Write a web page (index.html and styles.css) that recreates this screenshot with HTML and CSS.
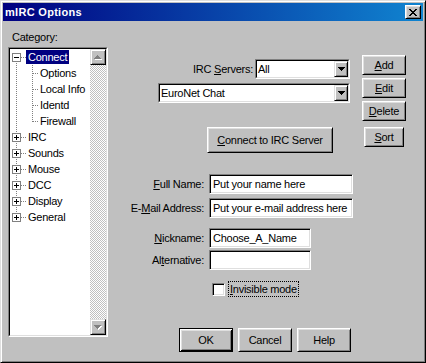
FILE: index.html
```html
<!DOCTYPE html>
<html>
<head>
<meta charset="utf-8">
<title>mIRC Options</title>
<link rel="stylesheet" href="styles.css">
</head>
<body>
<div class="window">
  <div class="titlebar">
    <span class="title">mIRC Options</span>
    <div class="close">
      <svg width="8" height="7" viewBox="0 0 8 7" shape-rendering="crispEdges"><path d="M0 0h2v1h-2zM6 0h2v1h-2zM1 1h2v1h-2zM5 1h2v1h-2zM2 2h4v1h-4zM3 3h2v1h-2zM2 4h4v1h-4zM1 5h2v1h-2zM5 5h2v1h-2zM0 6h2v1h-2zM6 6h2v1h-2z" fill="#000"/></svg>
    </div>
  </div>
  <div class="content">
    <div class="left">
      <div class="cat-label">Category:</div>
      <div class="tree">
        <div class="tree-inner">
          <div class="tree-items">
            <div class="row root first">
              <span class="gutter"><svg class="box" width="9" height="9" viewBox="0 0 9 9" shape-rendering="crispEdges"><rect x="0.5" y="0.5" width="8" height="8" fill="#fff" stroke="#808080"/><rect x="2" y="4" width="5" height="1" fill="#000"/></svg></span>
              <span class="label selected">Connect</span>
            </div>
            <div class="row child"><span class="gutter"></span><span class="label">Options</span></div>
            <div class="row child"><span class="gutter"></span><span class="label">Local Info</span></div>
            <div class="row child"><span class="gutter"></span><span class="label">Identd</span></div>
            <div class="row child lastchild"><span class="gutter"></span><span class="label">Firewall</span></div>
            <div class="row root">
              <span class="gutter"><svg class="box" width="9" height="9" viewBox="0 0 9 9" shape-rendering="crispEdges"><rect x="0.5" y="0.5" width="8" height="8" fill="#fff" stroke="#808080"/><rect x="2" y="4" width="5" height="1" fill="#000"/><rect x="4" y="2" width="1" height="5" fill="#000"/></svg></span>
              <span class="label">IRC</span>
            </div>
            <div class="row root">
              <span class="gutter"><svg class="box" width="9" height="9" viewBox="0 0 9 9" shape-rendering="crispEdges"><rect x="0.5" y="0.5" width="8" height="8" fill="#fff" stroke="#808080"/><rect x="2" y="4" width="5" height="1" fill="#000"/><rect x="4" y="2" width="1" height="5" fill="#000"/></svg></span>
              <span class="label">Sounds</span>
            </div>
            <div class="row root">
              <span class="gutter"><svg class="box" width="9" height="9" viewBox="0 0 9 9" shape-rendering="crispEdges"><rect x="0.5" y="0.5" width="8" height="8" fill="#fff" stroke="#808080"/><rect x="2" y="4" width="5" height="1" fill="#000"/><rect x="4" y="2" width="1" height="5" fill="#000"/></svg></span>
              <span class="label">Mouse</span>
            </div>
            <div class="row root">
              <span class="gutter"><svg class="box" width="9" height="9" viewBox="0 0 9 9" shape-rendering="crispEdges"><rect x="0.5" y="0.5" width="8" height="8" fill="#fff" stroke="#808080"/><rect x="2" y="4" width="5" height="1" fill="#000"/><rect x="4" y="2" width="1" height="5" fill="#000"/></svg></span>
              <span class="label">DCC</span>
            </div>
            <div class="row root">
              <span class="gutter"><svg class="box" width="9" height="9" viewBox="0 0 9 9" shape-rendering="crispEdges"><rect x="0.5" y="0.5" width="8" height="8" fill="#fff" stroke="#808080"/><rect x="2" y="4" width="5" height="1" fill="#000"/><rect x="4" y="2" width="1" height="5" fill="#000"/></svg></span>
              <span class="label">Display</span>
            </div>
            <div class="row root last">
              <span class="gutter"><svg class="box" width="9" height="9" viewBox="0 0 9 9" shape-rendering="crispEdges"><rect x="0.5" y="0.5" width="8" height="8" fill="#fff" stroke="#808080"/><rect x="2" y="4" width="5" height="1" fill="#000"/><rect x="4" y="2" width="1" height="5" fill="#000"/></svg></span>
              <span class="label">General</span>
            </div>
          </div>
          <div class="vscroll">
            <div class="sbtn">
              <svg width="8" height="5" viewBox="0 0 8 5" shape-rendering="crispEdges"><path d="M4 1h1v1h-1zM3 2h3v1h-3zM2 3h5v1h-5zM1 4h7v1h-7z" fill="#fff"/><path d="M3 0h1v1h-1zM2 1h3v1h-3zM1 2h5v1h-5zM0 3h7v1h-7z" fill="#808080"/></svg>
            </div>
            <div class="track"></div>
            <div class="sbtn">
              <svg width="8" height="5" viewBox="0 0 8 5" shape-rendering="crispEdges"><path d="M1 1h7v1h-7zM2 2h5v1h-5zM3 3h3v1h-3zM4 4h1v1h-1z" fill="#fff"/><path d="M0 0h7v1h-7zM1 1h5v1h-5zM2 2h3v1h-3zM3 3h1v1h-1z" fill="#808080"/></svg>
            </div>
          </div>
        </div>
      </div>
    </div>

    <div class="right">
      <div class="top">
        <div class="main">
          <div class="srv-row">
            <span class="srv-label">IRC <u>S</u>ervers:</span>
            <div class="combo all">
              <div class="combo-in">
                <span class="ctext">All</span>
                <span class="drop"><svg width="7" height="4" viewBox="0 0 7 4" shape-rendering="crispEdges"><path d="M0 0h7v1h-7zM1 1h5v1h-5zM2 2h3v1h-3zM3 3h1v1h-1z" fill="#000"/></svg></span>
              </div>
            </div>
          </div>
          <div class="combo net">
            <div class="combo-in">
              <span class="ctext">EuroNet Chat</span>
              <span class="drop"><svg width="7" height="4" viewBox="0 0 7 4" shape-rendering="crispEdges"><path d="M0 0h7v1h-7zM1 1h5v1h-5zM2 2h3v1h-3zM3 3h1v1h-1z" fill="#000"/></svg></span>
            </div>
          </div>
          <div class="btn connect"><span><u>C</u>onnect to IRC Server</span></div>
        </div>
        <div class="side">
          <div class="btn"><span><u>A</u>dd</span></div>
          <div class="btn"><span><u>E</u>dit</span></div>
          <div class="btn"><span><u>D</u>elete</span></div>
          <div class="btn sort"><span><u>S</u>ort</span></div>
        </div>
      </div>

      <div class="form">
        <div class="frow r-full">
          <span class="lbl"><u>F</u>ull Name:</span>
          <div class="field wide">Put your name here</div>
        </div>
        <div class="frow r-mail">
          <span class="lbl">E-<u>M</u>ail Address:</span>
          <div class="field wide">Put your e-mail address here</div>
        </div>
        <div class="frow r-nick">
          <span class="lbl"><u>N</u>ickname:</span>
          <div class="field narrow">Choose_A_Name</div>
        </div>
        <div class="frow r-alt">
          <span class="lbl">Al<u>t</u>ernative:</span>
          <div class="field narrow"></div>
        </div>
      </div>

      <div class="check-row">
        <span class="checkbox"></span>
        <span class="check-label"><u>I</u>nvisible mode</span>
      </div>

      <div class="bottom">
        <div class="btn dlg default"><span>OK</span></div>
        <div class="btn dlg"><span>Cancel</span></div>
        <div class="btn dlg"><span>Help</span></div>
      </div>
    </div>
  </div>
</div>
</body>
</html>
```

FILE: styles.css
```css
* { box-sizing: border-box; }

html, body {
  margin: 0;
  padding: 0;
}

body {
  width: 426px;
  height: 363px;
  overflow: hidden;
  background: #c0c0c0;
  font-family: "Liberation Sans", Arial, sans-serif;
  font-size: 11px;
  letter-spacing: -0.25px;
  color: #000;
}

u { text-decoration: underline; text-underline-offset: 1px; }

.window {
  width: 426px;
  height: 363px;
  background: #c0c0c0;
  border: 1px solid;
  border-color: #dfdfdf #000 #000 #dfdfdf;
  box-shadow: inset 1px 1px #fff, inset -1px -1px #808080;
  padding: 2px;
  display: flex;
  flex-direction: column;
}

/* Title bar */
.titlebar {
  height: 18px;
  flex: none;
  background: linear-gradient(to right, #000080, #1084d0);
  display: flex;
  align-items: center;
  justify-content: space-between;
  padding: 0 2px 0 2px;
}

.title {
  color: #fff;
  font-weight: bold;
  font-size: 11px;
  letter-spacing: 0.3px;
}

.close {
  width: 16px;
  height: 14px;
  background: #c0c0c0;
  border: 1px solid;
  border-color: #fff #000 #000 #fff;
  box-shadow: inset 1px 1px #dfdfdf, inset -1px -1px #808080;
  display: flex;
  align-items: center;
  justify-content: center;
}
.close svg { display: block; margin-left: -1px; }

/* Content */
.content {
  flex: 1;
  display: flex;
}

.left {
  width: 105px;
  flex: none;
  padding-left: 5px;
}

.cat-label {
  margin: 10px 0 3px 4px;
  line-height: 13px;
}

.tree {
  width: 100px;
  height: 290px;
  border: 1px solid;
  border-color: #808080 #fff #fff #808080;
}

.tree-inner {
  height: 100%;
  border: 1px solid;
  border-color: #000 #dfdfdf #dfdfdf #000;
  background: #fff;
  display: flex;
}

.tree-items {
  flex: 1;
}

.row {
  height: 16px;
  display: flex;
  align-items: center;
}

.gutter {
  flex: none;
  height: 16px;
  background-repeat: no-repeat;
}

.root .gutter {
  width: 16px;
  padding: 4px 0 0 2px;
  background-image:
    repeating-linear-gradient(#808080 0 1px, transparent 1px 2px),
    repeating-linear-gradient(to right, #808080 0 1px, transparent 1px 2px);
  background-size: 1px 16px, 5px 1px;
  background-position: 6px 0, 11px 8px;
}
.root.first .gutter {
  background-size: 1px 8px, 5px 1px;
  background-position: 6px 8px, 11px 8px;
}
.root.last .gutter {
  background-size: 1px 8px, 5px 1px;
  background-position: 6px 0, 11px 8px;
}

.box { display: block; }

.child .gutter {
  width: 28px;
  background-image:
    repeating-linear-gradient(#808080 0 1px, transparent 1px 2px),
    repeating-linear-gradient(#808080 0 1px, transparent 1px 2px),
    repeating-linear-gradient(to right, #808080 0 1px, transparent 1px 2px);
  background-size: 1px 16px, 1px 16px, 5px 1px;
  background-position: 6px 0, 22px 0, 23px 8px;
}
.child.lastchild .gutter {
  background-size: 1px 16px, 1px 9px, 5px 1px;
}

.label {
  padding: 0 2px;
  height: 14px;
  line-height: 14px;
  white-space: nowrap;
}
.selected {
  background: #000080;
  color: #fff;
}

.vscroll {
  width: 16px;
  flex: none;
  display: flex;
  flex-direction: column;
}

.sbtn {
  width: 16px;
  height: 16px;
  flex: none;
  background: #c0c0c0;
  border: 1px solid;
  border-color: #dfdfdf #000 #000 #dfdfdf;
  box-shadow: inset 1px 1px #fff, inset -1px -1px #808080;
  display: flex;
  align-items: center;
  justify-content: center;
}
.sbtn svg { display: block; }

.track {
  flex: 1;
  background: repeating-conic-gradient(#c0c0c0 0 25%, #fff 0 50%) 0 0 / 2px 2px;
}

/* Right panel */
.right {
  flex: 1;
  display: flex;
  flex-direction: column;
}

.top {
  display: flex;
  gap: 12px;
  margin: 34px 0 0 50px;
}

.main {
  width: 192px;
  display: flex;
  flex-direction: column;
}

.srv-row {
  display: flex;
  justify-content: flex-end;
  align-items: center;
  gap: 2px;
  margin-top: 4px;
}

.combo {
  height: 20px;
  border: 1px solid;
  border-color: #808080 #fff #fff #808080;
}
.combo.all { width: 95px; }
.combo.net { width: 192px; margin-top: 4px; }

.combo-in {
  height: 100%;
  border: 1px solid;
  border-color: #000 #dfdfdf #dfdfdf #000;
  background: #fff;
  display: flex;
  align-items: center;
}

.ctext {
  flex: 1;
  padding-left: 1px;
  white-space: nowrap;
}

.drop {
  width: 14px;
  height: 16px;
  flex: none;
  background: #c0c0c0;
  border: 1px solid;
  border-color: #dfdfdf #000 #000 #dfdfdf;
  box-shadow: inset 1px 1px #fff, inset -1px -1px #808080;
  display: flex;
  align-items: center;
  justify-content: center;
}
.drop svg { display: block; }

.btn {
  background: #c0c0c0;
  border: 1px solid;
  border-color: #fff #000 #000 #fff;
  box-shadow: inset 1px 1px #dfdfdf, inset -1px -1px #808080;
  display: flex;
  align-items: center;
  justify-content: center;
  white-space: nowrap;
}

.connect {
  width: 126px;
  height: 26px;
  margin: 24px 0 0 49px;
}

.side {
  width: 44px;
  display: flex;
  flex-direction: column;
  gap: 3px;
}
.side .btn { height: 20px; }
.side .sort {
  width: 40px;
  align-self: center;
  margin-top: 3px;
}

/* Form */
.form {
  display: flex;
  flex-direction: column;
  margin-top: 21px;
}

.frow {
  display: flex;
  align-items: center;
}
.r-mail { margin-top: 4px; }
.r-nick { margin-top: 10px; }
.r-alt { margin-top: 2px; }

.lbl {
  width: 96px;
  margin-right: 5px;
  text-align: right;
  white-space: nowrap;
}

.field {
  height: 20px;
  background: #fff;
  border: 1px solid;
  border-color: #808080 #fff #fff #808080;
  box-shadow: inset 1px 1px #000, inset -1px -1px #dfdfdf;
  padding: 0 3px;
  display: flex;
  align-items: center;
  white-space: nowrap;
  overflow: hidden;
}
.field.wide { width: 144px; }
.field.narrow { width: 102px; }

.check-row {
  display: flex;
  align-items: center;
  height: 16px;
  margin: 11px 0 0 104px;
}

.checkbox {
  width: 13px;
  height: 13px;
  background: #fff;
  border: 1px solid;
  border-color: #808080 #fff #fff #808080;
  box-shadow: inset 1px 1px #000, inset -1px -1px #dfdfdf;
}

.check-label {
  margin-left: 3px;
  padding: 0 1px;
  line-height: 14px;
  border: 1px dotted #000;
}

.bottom {
  display: flex;
  gap: 5px;
  margin: 31px 0 0 71px;
}

.dlg {
  width: 54px;
  height: 24px;
}

.btn.default {
  border-color: #000;
  box-shadow: inset 1px 1px #fff, inset -1px -1px #000, inset 2px 2px #dfdfdf, inset -2px -2px #808080;
}
```
